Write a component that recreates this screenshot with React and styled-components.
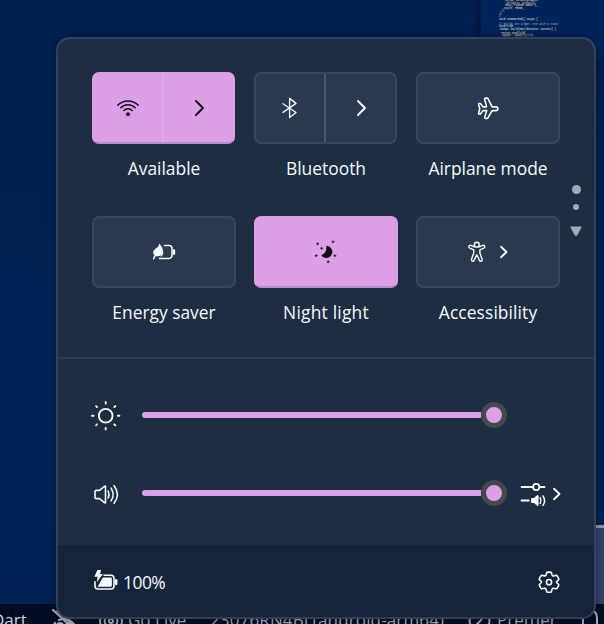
import React from "react";
import styled, { createGlobalStyle } from "styled-components";

const GlobalStyle = createGlobalStyle`
  * { box-sizing: border-box; }
  body { margin: 0; background: #002050; }
`;

const sans = `"Open Sans", "Noto Sans", sans-serif`;
const accent = "#dba0e6";

const Desktop = styled.div`
  position: relative;
  display: flex;
  flex-direction: column;
  width: 604px;
  height: 624px;
  overflow: hidden;
  background: linear-gradient(#00204f, #002456 55%, #002255);
  font-family: ${sans};
`;

const Backdrop = styled.div`
  display: flex;
  flex: 1;
  flex-direction: column;
  justify-content: space-between;
  align-items: flex-end;
`;

const EditorPreview = styled.div`
  width: 124px;
  height: 60px;
  padding-left: 18px;
  border-left: 1px solid #001b47;
  background: #002459;
  box-shadow: -3px 0 7px rgba(0, 10, 35, 0.5);
`;

const CodeLine = styled.div`
  height: ${(p) => p.$height || 2.5}px;
  padding-left: ${(p) => p.$indent || 0}px;
  font: bold 2.6px/2.5px "Liberation Mono", monospace;
  white-space: pre;
  color: ${(p) => p.$color || "#c3c6c6"};
`;

const WindowEdge = styled.div`
  width: 20px;
  height: 79px;
  border-top: 3px solid #9299a8;
  background: #34436a;
`;

const StatusBar = styled.div`
  display: grid;
  grid-template-columns: 51px 49px 111px 257px 112px 30px;
  align-items: center;
  flex: 0 0 34px;
  height: 34px;
  padding-bottom: 3px;
  margin-bottom: -14px;
  background: #020d24;
  color: #a9afb8;
  font-size: 17px;
`;

const StatusItem = styled.div`
  display: flex;
  align-items: center;
  gap: 6px;
  white-space: nowrap;
  letter-spacing: ${(p) => p.$spacing || 0}px;
  margin-left: ${(p) => p.$shift || 0}px;
  color: ${(p) => p.$color || "inherit"};
`;

const Flyout = styled.section`
  position: absolute;
  left: 56px;
  top: 37px;
  display: flex;
  flex-direction: column;
  width: 540px;
  height: 582px;
  overflow: hidden;
  border: 2px solid #33445a;
  border-bottom-color: #343e4c;
  border-radius: 14px;
  background: #1d2d42;
  color: #f7fafc;
  box-shadow: 0 0 12px rgba(0, 5, 25, 0.38);
`;

const QuickArea = styled.div`
  display: flex;
  flex: 0 0 320px;
  padding: 33px 0 0 34px;
  border-bottom: 2px solid #2d3d51;
`;

const TileGrid = styled.div`
  display: grid;
  grid-template-columns: repeat(3, 144px);
  grid-template-rows: 144px 130px;
  column-gap: 18px;
`;

const TileCell = styled.div`
  display: flex;
  flex-direction: column;
  align-items: center;
`;

const TileButton = styled.button`
  display: flex;
  align-items: stretch;
  align-self: flex-start;
  flex: 0 0 72px;
  width: ${(p) => (p.$split ? 143 : 144)}px;
  padding: 0;
  overflow: hidden;
  border: 2px solid ${(p) => (p.$active ? accent : "#38485c")};
  border-bottom-color: ${(p) => (p.$active ? "#bd8dca" : "#38485c")};
  border-radius: 7px;
  background: ${(p) => (p.$active ? accent : "#29394e")};
  color: ${(p) => (p.$active ? "#160b1d" : "#f7fafc")};
`;

const TilePart = styled.span`
  display: flex;
  flex: 1;
  align-items: center;
  justify-content: center;
  gap: 14px;
  padding-left: ${(p) => p.$inset || 0}px;
`;

const TileDivider = styled.span`
  width: 2px;
  background: ${(p) => (p.$active ? "#e0aaea" : "#46566b")};
`;

const TileLabel = styled.span`
  margin-top: 12.4px;
  font-size: 17.4px;
  line-height: 25px;
  letter-spacing: ${(p) => p.$spacing || 0}px;
  white-space: nowrap;
`;

const Pager = styled.div`
  display: flex;
  flex-direction: column;
  align-items: center;
  width: 14px;
  margin: 113px 0 0 9px;
`;

const PageDot = styled.span`
  width: ${(p) => p.$size}px;
  height: ${(p) => p.$size}px;
  margin-bottom: ${(p) => p.$gap}px;
  border-radius: 50%;
  background: #a1a9b3;
`;

const SliderArea = styled.div`
  display: grid;
  flex: 0 0 186px;
  grid-template-rows: 78px 78px;
  padding: 17px 0 0 34px;
`;

const SliderRow = styled.div`
  display: grid;
  grid-template-columns: 50px 365px 54px;
  align-items: center;
`;

const SliderIcon = styled.span`
  display: flex;
  justify-content: center;
  width: 28px;
  padding-top: 2px;
`;

const Track = styled.div`
  display: flex;
  align-items: center;
`;

const Fill = styled.span`
  flex: 1;
  height: 6px;
  border-radius: 3px 0 0 3px;
  background: ${accent};
`;

const Thumb = styled.span`
  width: 26px;
  height: 26px;
  border: 5px solid #45494c;
  border-radius: 50%;
  background: ${accent};
`;

const MixerButton = styled.span`
  display: flex;
  align-items: center;
  gap: 7px;
  margin: 2px 0 0 13px;
`;

const Footer = styled.footer`
  display: flex;
  flex: 1;
  align-items: center;
  justify-content: space-between;
  padding: 1px 34px 0 35px;
  border-top: 1px solid #17263a;
  background: #152539;
`;

const Battery = styled.span`
  display: flex;
  align-items: center;
  gap: 5px;
  font-size: 17.4px;
  letter-spacing: -0.5px;
`;

const Glyph = styled.svg`
  display: block;
  flex: none;
  overflow: visible;
  fill: none;
  stroke: currentColor;
  stroke-width: ${(p) => p.$weight || 1.5};
  stroke-linecap: round;
  stroke-linejoin: round;
`;

function Icon({ w = 24, h = 24, scale = 1, weight, children }) {
  return (
    <Glyph width={w * scale} height={h * scale} viewBox={`0 0 ${w} ${h}`} $weight={weight}>
      {children}
    </Glyph>
  );
}

const Chevron = ({ small }) => small ? (
  <Icon w={8} h={12} weight={1.9}><path d="M1 .8l5.5 5.2L1 11.2" /></Icon>
) : (
  <Icon w={9} h={16} weight={2.1}><path d="M1 1l7 7-7 7" /></Icon>
);

const Wifi = () => (
  <Icon>
    <path d="M1.8 9.2a14.2 14.2 0 0 1 20.4 0M4.8 11.7a10.2 10.2 0 0 1 14.4 0M7.8 14.5a6 6 0 0 1 8.4 0" />
    <circle cx="12" cy="18.2" r="2" fill="currentColor" stroke="none" />
  </Icon>
);

const Bluetooth = () => (
  <Icon weight={1.35}><path d="M5 7.7l13 8.8-6.4 5V2.4l6.4 5-13 9" /></Icon>
);

const Airplane = () => (
  <Icon weight={1.7} scale={0.94}>
    <path d="M2.2 7h1.5l2.6 3.5h4L8.2 2.6q-.4-1.4 1-1.4h1.6q.7 0 1 .8l4.3 8.5h4.1a2 2 0 0 1 0 4h-4.1L11.8 22q-.3.8-1 .8H9.2q-1.4 0-1-1.4l2.1-6.9h-4L3.7 18H2.2q-.7 0-.5-.8l1.2-4.7-1.2-4.7Q1.5 7 2.2 7z" />
  </Icon>
);

const LeafBattery = () => (
  <Icon weight={1.5}>
    <path d="M12.5 5.6H17a3 3 0 0 1 3 3v6.8a3 3 0 0 1-3 3H7.5" />
    <path d="M21.9 10.6v3" strokeWidth="2.6" />
    <path d="M7.6 4.7q3 2.4 2.7 6.1c-.3 3.5-2.4 5.1-5 5.1-2.2 0-3.6-1.4-3.6-3.5 0-4 4.6-3.3 5.9-7.7z" fill="currentColor" strokeWidth="1" />
    <path d="M1.6 18.8q.5-3 3.7-5.6M10.5 11.5q.3 2.7-1.4 4.3" />
  </Icon>
);

const Moon = () => (
  <Icon>
    <path d="M12.5 5.8a6.1 6.1 0 1 1-5.3 9.5q5.6-1.8 5.3-9.5z" fill="currentColor" stroke="none" />
    <path d="M3.7 2.8v2M2.7 3.8h2M19.1.9v2M18.1 1.9h2M7.6 7.3v2M6.6 8.3h2M2.2 14.7v2M1.2 15.7h2M20.9 14.7v2M19.9 15.7h2M14.2 20.8v2M13.2 21.8h2" strokeWidth=".9" />
  </Icon>
);

const Person = () => (
  <Icon w={20} h={24} weight={1.6} scale={0.88}>
    <circle cx="10" cy="4.2" r="2.8" />
    <path d="M7.4 6.7 3.2 5C1.1 4.3-.1 7 2 8l4.5 2v3.7l-2.5 7c-.7 2.2 2.2 3.2 3 1.1L10 15.7l3 6.1c.8 2.1 3.7 1.1 3-1.1l-2.5-7V10L18 8c2.1-1 .9-3.7-1.2-3l-4.2 1.7" />
  </Icon>
);

const Sun = () => (
  <Icon w={30} h={30} weight={1.9} scale={0.98}>
    <circle cx="15" cy="15" r="7" />
    <path d="M15 1v1.6M15 27.4V29M1 15h1.6M27.4 15H29M5.2 5.2l1 1M23.8 23.8l1 1M24.8 5.2l-1 1M6.2 23.8l-1 1" />
  </Icon>
);

const Speaker = () => (
  <Icon w={26} h={22} weight={1.6}>
    <path d="M3.2 7.4h3.3l5-4.1q1-.8 1 .5v15.4q0 1.3-1 .5l-5-4.1H3.2Q2 15.6 2 14.4V8.6q0-1.2 1.2-1.2zM15.2 8q1.6 3.5 0 7M18.1 5.2q4.1 6.3 0 12.6M21.1 2.7q6.5 8.8 0 17.6" />
  </Icon>
);

const Mixer = () => (
  <Icon w={26} h={26} weight={1.8}>
    <path d="M1.5 6h10.8M20 6h4.5M1.5 19.5h7.3" />
    <circle cx="16.2" cy="6" r="3.1" />
    <path d="M12 17.8h2.5l3.2-2.8v9l-3.2-2.8H12z" fill="currentColor" />
    <path d="M20.2 16.7q1.5 2.9 0 5.8M23 14.8q3.2 4.8 0 9.6" strokeWidth="1.5" />
  </Icon>
);

const ChargingBattery = () => (
  <Icon w={25} h={24} weight={1.6}>
    <path d="M11 5.2h7a3 3 0 0 1 3 3v7.8a3 3 0 0 1-3 3H5a3 3 0 0 1-3-3v-4.3" />
    <path d="M23.2 10.3v3.7" strokeWidth="2.4" />
    <path d="M9.8 7.4h7.9q1.2 0 1.2 1.2v6.9q0 1.3-1.2 1.3H4.6z" fill="currentColor" stroke="none" />
    <path d="M4.4 0h3.8L7 4h3L3.8 12l.7-5.2H1.4z" fill="currentColor" stroke="none" />
  </Icon>
);

const Gear = () => (
  <Icon weight={1.7} scale={0.92}>
    <path d="M9.5 1.5Q12 .9 14.5 1.5l.8 3q.5 1 1.7.8l3.2-.6q1.9 2 2.5 4.5l-2.2 2q-.7.8 0 1.6l2.2 2.2q-.7 2.6-2.5 4.4l-3.2-.6q-1.2-.1-1.7.9l-.8 3.1q-2.5.6-5 0l-.8-3.1q-.5-1-1.7-.9l-3.2.6Q2 17.6 1.3 15l2.2-2.2q.7-.8 0-1.6l-2.2-2q.6-2.5 2.5-4.5l3.2.6q1.2.2 1.7-.8z" />
    <circle cx="12" cy="12.1" r="2.8" />
  </Icon>
);

function Tile({ active, label, spacing, icon, children }) {
  return (
    <TileCell>
      <TileButton $active={active} $split={Boolean(children)}>
        <TilePart>{icon}</TilePart>
        {children && <><TileDivider $active={active} /><TilePart $inset={2}>{children}</TilePart></>}
      </TileButton>
      <TileLabel $spacing={spacing}>{label}</TileLabel>
    </TileCell>
  );
}

const code = [
  [6, "child: Column(widgets"], [7, "children: <Widget>[", "#d09a6e"], [6, "Text('Pushed count'), "], [5, "style: Theme,"],
  [3, ");"], [1, "}"], [0, "}"], [0, "", null, 1.5], [0, "void someMethod() async {"], [0, "", null, 2],
  [0, "// builds the widget tree with a state", "#6a9fbe"], [0, "@override"], [1, "Widget build(BuildContext context) {"],
  [0, "", null, 1.5], [2, "return Scaffold("], [3, "appBar: AppBar(title,", "#d09a6e"], [4, "title: Text(widget)"],
  [7, "Theme.of(context).colorScheme.inversePrimary", null, 2], [5, "backgroundColor: context.theme", "#d09a6e"],
];

export default function App() {
  return (
    <Desktop>
      <GlobalStyle />
      <Backdrop>
        <EditorPreview>
          {code.map(([indent, text, color, height], i) => (
            <CodeLine key={i} $indent={indent} $color={color} $height={height}>{text}</CodeLine>
          ))}
        </EditorPreview>
        <WindowEdge />
      </Backdrop>
      <StatusBar>
        <StatusItem $shift={-8} $color="#d0d4d8">Dart</StatusItem>
        <StatusItem>
          <Icon w={26} h={24} weight={2.2}>
            <path d="M4 15q-2 3 0 8M8 12q8-3 14 3 3 4 1 8M2 2l22 20" />
            <path d="M6 3l17 15" strokeWidth="1.6" />
            <circle cx="9" cy="18" r="3" /><circle cx="18" cy="18" r="3" />
          </Icon>
        </StatusItem>
        <StatusItem>
          <Icon w={22} h={20} weight={1.8}>
            <circle cx="11" cy="11" r="2" />
            <path d="M7 6q-5 5 0 10M15 6q5 5 0 10M3.5 3q-7 8 0 16M18.5 3q7 8 0 16" />
          </Icon>
          Go Live
        </StatusItem>
        <StatusItem $shift={-1} $spacing={0.14}>23076RN4BL(android-arm64)</StatusItem>
        <StatusItem>
          <Icon w={23} h={20} weight={1.8}><path d="M5 3q-7 8 0 15M18 3q7 8 0 15M8 5q7-4 7 1 0 3-7 9h8" /></Icon>
          Prettier
        </StatusItem>
        <StatusItem>
          <Icon w={20} h={24} weight={2}><path d="M3 22V8M9 2q8 0 8 8v12" /></Icon>
        </StatusItem>
      </StatusBar>
      <Flyout>
        <QuickArea>
          <TileGrid>
            <Tile active label="Available" icon={<Wifi />}><Chevron /></Tile>
            <Tile label="Bluetooth" icon={<Bluetooth />}><Chevron /></Tile>
            <Tile label="Airplane mode" icon={<Airplane />} />
            <Tile label="Energy saver" icon={<LeafBattery />} />
            <Tile active label="Night light" spacing={0.22} icon={<Moon />} />
            <Tile label="Accessibility" spacing={0.1} icon={<><Person /><Chevron small /></>} />
          </TileGrid>
          <Pager>
            <PageDot $size={9} $gap={10} />
            <PageDot $size={6} $gap={16} />
            <Icon w={12} h={10}><path d="M1.2 1.2h9.6L7 8.4Q6 9.6 5 8.4z" fill="#a1a9b3" stroke="#a1a9b3" /></Icon>
          </Pager>
        </QuickArea>
        <SliderArea>
          <SliderRow><SliderIcon><Sun /></SliderIcon><Track><Fill /><Thumb /></Track></SliderRow>
          <SliderRow>
            <SliderIcon><Speaker /></SliderIcon>
            <Track><Fill /><Thumb /></Track>
            <MixerButton><Mixer /><Chevron small /></MixerButton>
          </SliderRow>
        </SliderArea>
        <Footer>
          <Battery><ChargingBattery />100%</Battery>
          <Gear />
        </Footer>
      </Flyout>
    </Desktop>
  );
}
